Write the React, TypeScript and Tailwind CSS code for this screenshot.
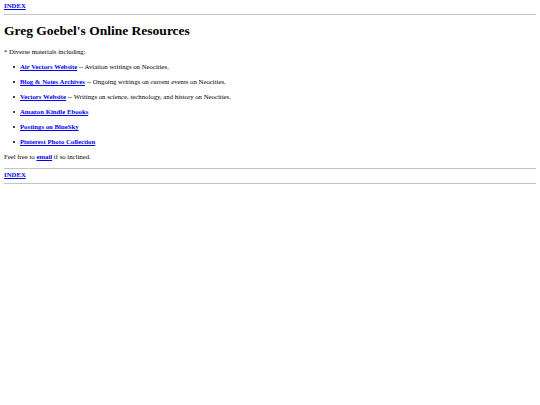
const links = [
  { label: 'Air Vectors Website', note: ' -- Aviation writings on Neocities.' },
  { label: 'Blog & Notes Archives', note: ' -- Ongoing writings on current events on Neocities.' },
  { label: 'Vectors Website', note: ' -- Writings on science, technology, and history on Neocities.' },
  { label: 'Amazon Kindle Ebooks', note: '' },
  { label: 'Postings on BlueSky', note: '' },
  { label: 'Pinterest Photo Collection', note: '' },
];

function NavLink({ children }: { children: React.ReactNode }) {
  return (
    <a href="#" className="font-bold text-[#0000ee] underline">
      {children}
    </a>
  );
}

function Rule({ className }: { className: string }) {
  return <hr className={`border-0 border-t border-[#c4c4c4] ${className}`} />;
}

export default function App() {
  return (
    <div className="min-h-screen bg-white px-[4px] pt-[2px] text-[6.75px] leading-[8px] text-black [font-family:'Liberation_Serif',serif]">
      <div>
        <NavLink>INDEX</NavLink>
      </div>
      <Rule className="mt-[4px]" />
      <h1 className="text-[13.5px] leading-[16px] font-bold mt-[8px]">Greg Goebel's Online Resources</h1>
      <p className="mt-[9px]">* Diverse materials including:</p>
      <ul className="mt-[7px]">
        {links.map((item) => (
          <li key={item.label} className="mb-[7px] flex items-center">
            <span className="ml-[9px] mr-[5px] h-[2px] w-[2px] rounded-full bg-black" />
            <span>
              <NavLink>{item.label}</NavLink>
              {item.note}
            </span>
          </li>
        ))}
      </ul>
      <p>
        Feel free to <NavLink>email</NavLink> if so inclined.
      </p>
      <Rule className="mt-[7px]" />
      <div className="mt-[2px]">
        <NavLink>INDEX</NavLink>
      </div>
      <Rule className="mt-[4px]" />
    </div>
  );
}
